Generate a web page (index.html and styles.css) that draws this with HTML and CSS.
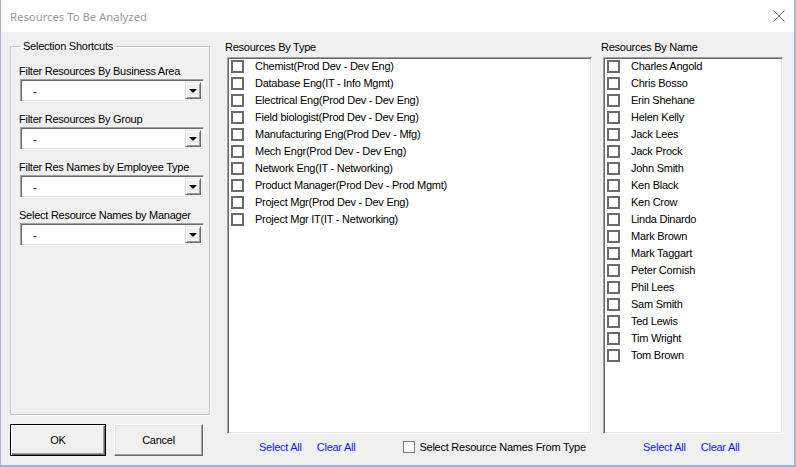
FILE: index.html
```html
<!DOCTYPE html>
<html lang="en">
<head>
  <meta charset="UTF-8">
  <title>Resources To Be Analyzed</title>
  <link rel="stylesheet" href="styles.css">
</head>
<body>
  <div class="window">
    <div class="titlebar">
      <span class="title">Resources To Be Analyzed</span>
      <svg class="close" width="12" height="12" viewBox="0 0 12 12">
        <path d="M0.5 0.5 L11.5 11.5 M11.5 0.5 L0.5 11.5" stroke="#6f6f6f" stroke-width="1" fill="none"/>
      </svg>
    </div>

    <div class="client">
      <!-- left column: filters + buttons -->
      <div class="col-left">
        <fieldset class="frame">
          <legend>Selection Shortcuts</legend>
          <div class="field">
            <div class="lbl">Filter Resources By Business Area</div>
            <div class="combo"><span class="val">-</span><span class="drop"><i class="arrow"></i></span></div>
          </div>
          <div class="field">
            <div class="lbl">Filter Resources By Group</div>
            <div class="combo"><span class="val">-</span><span class="drop"><i class="arrow"></i></span></div>
          </div>
          <div class="field">
            <div class="lbl">Filter Res Names by Employee Type</div>
            <div class="combo"><span class="val">-</span><span class="drop"><i class="arrow"></i></span></div>
          </div>
          <div class="field">
            <div class="lbl">Select Resource Names by Manager</div>
            <div class="combo"><span class="val">-</span><span class="drop"><i class="arrow"></i></span></div>
          </div>
        </fieldset>
        <div class="buttons">
          <button class="btn btn-default">OK</button>
          <button class="btn btn-cancel">Cancel</button>
        </div>
      </div>

      <!-- middle column: by type -->
      <div class="col-type">
        <div class="head">Resources By Type</div>
        <div class="listbox">
          <div class="item"><span class="box"></span>Chemist(Prod Dev - Dev Eng)</div>
          <div class="item"><span class="box"></span>Database Eng(IT - Info Mgmt)</div>
          <div class="item"><span class="box"></span>Electrical Eng(Prod Dev - Dev Eng)</div>
          <div class="item"><span class="box"></span>Field biologist(Prod Dev - Dev Eng)</div>
          <div class="item"><span class="box"></span>Manufacturing Eng(Prod Dev - Mfg)</div>
          <div class="item"><span class="box"></span>Mech Engr(Prod Dev - Dev Eng)</div>
          <div class="item"><span class="box"></span>Network Eng(IT - Networking)</div>
          <div class="item"><span class="box"></span>Product Manager(Prod Dev - Prod Mgmt)</div>
          <div class="item"><span class="box"></span>Project Mgr(Prod Dev - Dev Eng)</div>
          <div class="item"><span class="box"></span>Project Mgr IT(IT - Networking)</div>
        </div>
        <div class="foot">
          <a class="link">Select All</a>
          <a class="link">Clear All</a>
          <label class="chk"><span class="chkbox"></span>Select Resource Names From Type</label>
        </div>
      </div>

      <!-- right column: by name -->
      <div class="col-name">
        <div class="head">Resources By Name</div>
        <div class="listbox">
          <div class="item"><span class="box"></span>Charles Angold</div>
          <div class="item"><span class="box"></span>Chris Bosso</div>
          <div class="item"><span class="box"></span>Erin Shehane</div>
          <div class="item"><span class="box"></span>Helen Kelly</div>
          <div class="item"><span class="box"></span>Jack Lees</div>
          <div class="item"><span class="box"></span>Jack Prock</div>
          <div class="item"><span class="box"></span>John Smith</div>
          <div class="item"><span class="box"></span>Ken Black</div>
          <div class="item"><span class="box"></span>Ken Crow</div>
          <div class="item"><span class="box"></span>Linda Dinardo</div>
          <div class="item"><span class="box"></span>Mark Brown</div>
          <div class="item"><span class="box"></span>Mark Taggart</div>
          <div class="item"><span class="box"></span>Peter Cornish</div>
          <div class="item"><span class="box"></span>Phil Lees</div>
          <div class="item"><span class="box"></span>Sam Smith</div>
          <div class="item"><span class="box"></span>Ted Lewis</div>
          <div class="item"><span class="box"></span>Tim Wright</div>
          <div class="item"><span class="box"></span>Tom Brown</div>
        </div>
        <div class="foot">
          <a class="link">Select All</a>
          <a class="link">Clear All</a>
        </div>
      </div>
    </div>
  </div>
</body>
</html>
```

FILE: styles.css
```css
/* Windows style user form */
html, body {
  margin: 0;
  padding: 0;
}
body {
  width: 796px;
  height: 467px;
  overflow: hidden;
  background: #f0f0f0;
  font-family: "Liberation Sans", Arial, sans-serif;
  font-size: 11px;
  letter-spacing: -0.25px;
  color: #000;
  white-space: nowrap;
}
.window {
  width: 796px;
  height: 467px;
  box-sizing: border-box;
  border-left: 1px solid #a9b1cf;
  border-right: 2px solid #a9b1cf;
  border-bottom: 2px solid #a9b1cf;
  background: #f0f0f0;
  display: flex;
  flex-direction: column;
}
.titlebar {
  height: 32px;
  background: #fff;
  display: flex;
  align-items: center;
  justify-content: space-between;
  padding: 0 9px 0 9px;
}
.title {
  font-family: "Noto Sans", "Open Sans", sans-serif;
  font-size: 11.3px;
  letter-spacing: 0;
  color: #999;
}
.close {
  display: block;
  margin-top: -1px;
}

.client {
  flex: 1;
  display: flex;
  padding: 8px 0 0 9px;
}

/* left column */
.col-left {
  width: 199px;
  display: flex;
  flex-direction: column;
}
.frame {
  margin: 0;
  height: 375px;
  box-sizing: border-box;
  border: 1px solid #c4c4c4;
  box-shadow: 1px 1px 0 #fff, inset 1px 1px 0 #fff;
  padding: 11px 5px 0 8px;
}
.frame legend {
  padding: 0 3px;
  margin-left: 1px;
}
.field {
  height: 48px;
}
.lbl {
  height: 16px;
  line-height: 17px;
}
.combo {
  width: 184px;
  height: 23px;
  box-sizing: border-box;
  margin-left: 1px;
  background: #fff;
  border: 1px solid;
  border-color: #a0a0a0 #fff #fff #a0a0a0;
  box-shadow: inset 1px 1px 0 #696969, inset -1px -1px 0 #e3e3e3;
  display: flex;
  align-items: center;
  justify-content: space-between;
  padding: 0 2px 0 0;
}
.val {
  padding-left: 12px;
}
.drop {
  width: 16px;
  height: 17px;
  box-sizing: border-box;
  background: #f0f0f0;
  border: 1px solid;
  border-color: #e3e3e3 #696969 #696969 #e3e3e3;
  box-shadow: inset 1px 1px 0 #fff, inset -1px -1px 0 #a0a0a0;
  display: flex;
  align-items: center;
  justify-content: center;
}
.arrow {
  width: 0;
  height: 0;
  border-left: 4px solid transparent;
  border-right: 4px solid transparent;
  border-top: 4px solid #000;
}
.buttons {
  display: flex;
  gap: 8px;
  margin-top: 9px;
}
.btn {
  height: 32px;
  box-sizing: border-box;
  font-family: "Liberation Sans", Arial, sans-serif;
  font-size: 11px;
  letter-spacing: -0.25px;
  color: #000;
  background: #f0f0f0;
  border: 1px solid;
  border-color: #fff #696969 #696969 #fff;
  box-shadow: inset -1px -1px 0 #a0a0a0, inset 1px 1px 0 #e3e3e3;
  padding: 0;
}
.btn-default {
  width: 96px;
  border: 1px solid #000;
  box-shadow: inset 1px 1px 0 #fff, inset -1px -1px 0 #696969, inset -2px -2px 0 #a0a0a0;
}
.btn-cancel {
  width: 89px;
}

/* list columns */
.col-type {
  width: 367px;
  margin-left: 16px;
  display: flex;
  flex-direction: column;
}
.col-name {
  width: 182px;
  margin-left: 9px;
  display: flex;
  flex-direction: column;
}
.head {
  height: 17px;
  line-height: 14px;
}
.listbox {
  height: 377px;
  margin-left: 2px;
  box-sizing: border-box;
  background: #fff;
  border: 1px solid;
  border-color: #a0a0a0 #fff #fff #a0a0a0;
  box-shadow: inset 1px 1px 0 #696969, inset -1px -1px 0 #e3e3e3;
  padding: 0 0 0 3px;
}
.item {
  height: 17px;
  line-height: 17px;
  display: flex;
  align-items: center;
}
.box {
  width: 13px;
  height: 13px;
  box-sizing: border-box;
  border: 2px solid #6b6b6b;
  margin-right: 11px;
  flex: none;
}
.foot {
  display: flex;
  align-items: center;
  height: 26px;
  padding-left: 34px;
}
.link {
  color: #1515ff;
  margin-right: 15px;
}
.chk {
  display: flex;
  align-items: center;
  margin-left: 33px;
}
.chkbox {
  width: 12px;
  height: 12px;
  box-sizing: border-box;
  background: #fff;
  border: 1px solid #7a7a7a;
  margin-right: 4px;
}
.col-name .foot {
  padding-left: 42px;
}
```
